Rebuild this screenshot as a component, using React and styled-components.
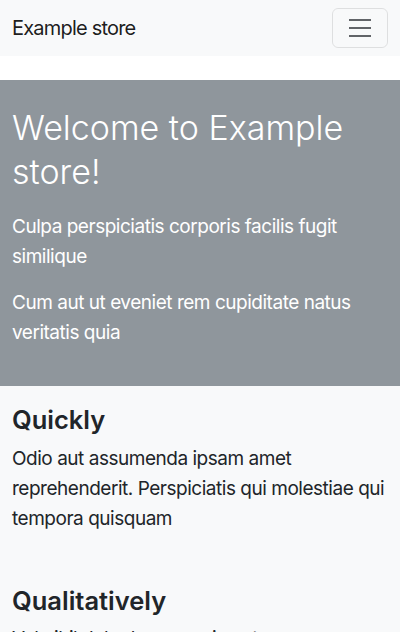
import React from 'react';
import styled, { createGlobalStyle } from 'styled-components';

const GlobalStyle = createGlobalStyle`
  * { box-sizing: border-box; }
  body {
    margin: 0;
    background: #fff;
    color: #212529;
    font-family: Inter, "Noto Sans", sans-serif;
  }
`;

const Navbar = styled.nav`
  display: flex;
  align-items: center;
  justify-content: space-between;
  height: 56px;
  padding: 0 12px;
  background: #f8f9fa;
  margin-bottom: 24px;
`;

const Brand = styled.a`
  font-size: 20px;
  line-height: 30px;
  letter-spacing: -0.04em;
  color: rgba(0, 0, 0, 0.9);
  text-decoration: none;
`;

const Toggler = styled.button`
  display: flex;
  align-items: center;
  justify-content: center;
  width: 56px;
  height: 40px;
  padding: 0;
  background: transparent;
  border: 1px solid rgba(0, 0, 0, 0.1);
  border-radius: 6px;
`;

const Jumbotron = styled.header`
  background: #8f969c;
  color: #fff;
  padding: 26px 12px 22px;
`;

const Title = styled.h1`
  margin: 0 0 18px;
  font-size: 34px;
  line-height: 44px;
  font-weight: 300;
`;

const Lead = styled.p`
  margin: 0 0 16px;
  font-size: 19px;
  line-height: 30px;
  letter-spacing: -0.025em;
  font-weight: 400;
`;

const Main = styled.main`
  background: #f8f9fa;
`;

const Section = styled.section`
  padding: 19px 12px 17px;
`;

const Heading = styled.h2`
  margin: 0 0 8px;
  font-size: 25.5px;
  line-height: 1.2;
  font-weight: 600;
`;

const Text = styled.p`
  margin: 0 0 16px;
  font-size: 19px;
  line-height: 30px;
  letter-spacing: -0.025em;
`;

const features = [
  {
    title: 'Quickly',
    text: 'Odio aut assumenda ipsam amet reprehenderit. Perspiciatis qui molestiae qui tempora quisquam',
  },
  {
    title: 'Qualitatively',
    text: 'Vel nihil dolor harum quia autem quos eveniet. Sed illum et ratione',
  },
];

function HamburgerIcon() {
  return (
    <svg width="30" height="30" viewBox="0 0 30 30">
      <path
        stroke="rgba(33,37,41,0.7)"
        strokeLinecap="butt"
        strokeWidth="2"
        d="M4 7h22M4 15h22M4 23h22"
      />
    </svg>
  );
}

export default function App() {
  return (
    <>
      <GlobalStyle />
      <Navbar>
        <Brand href="#">Example store</Brand>
        <Toggler aria-label="Toggle navigation">
          <HamburgerIcon />
        </Toggler>
      </Navbar>
      <Jumbotron>
        <Title>Welcome to Example store!</Title>
        <Lead>Culpa perspiciatis corporis facilis fugit similique</Lead>
        <Lead>Cum aut ut eveniet rem cupiditate natus veritatis quia</Lead>
      </Jumbotron>
      <Main>
        {features.map(f => (
          <Section key={f.title}>
            <Heading>{f.title}</Heading>
            <Text>{f.text}</Text>
          </Section>
        ))}
      </Main>
    </>
  );
}
